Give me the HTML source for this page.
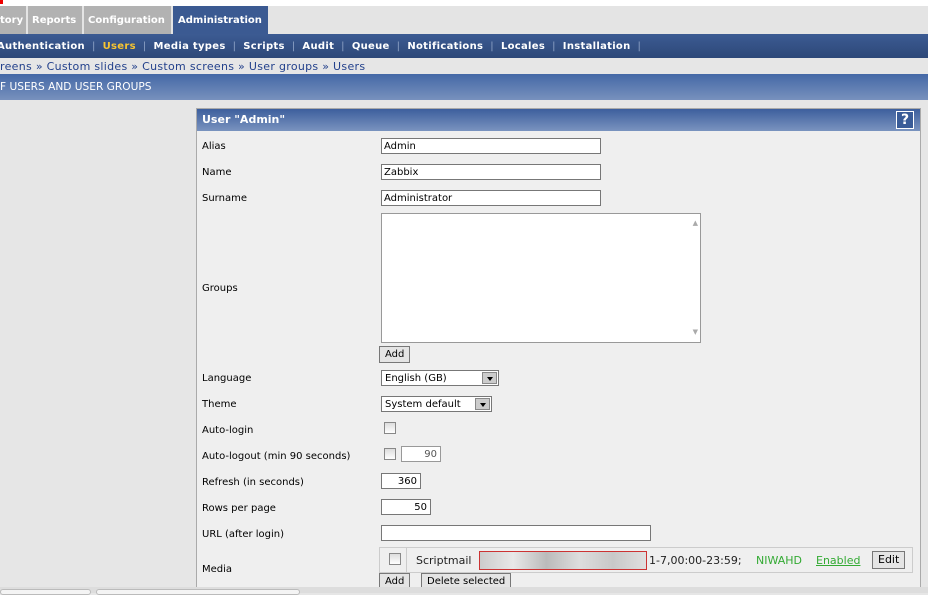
<!DOCTYPE html>
<html><head><style>
*{margin:0;padding:0;box-sizing:border-box}
body{width:928px;height:593px;overflow:hidden;background:#e6e6e6;font-family:"DejaVu Sans","Liberation Sans",sans-serif;font-size:10px;color:#000;position:relative}
.a{position:absolute}
.tab{position:absolute;top:6px;height:28px;background:#b2b2b2;color:#fff;font-weight:bold;font-size:10px;line-height:29px;padding-left:4px;white-space:nowrap}
.nav{top:34px;left:0;width:928px;height:24px;background:linear-gradient(#3c5b93,#2d4878);color:#fff;font-weight:bold;font-size:10px;line-height:25px;white-space:nowrap;letter-spacing:0.3px}
.nav span.s{color:#8ea3c6;margin:0 7px;font-weight:normal}
.bc{top:58px;left:0;height:16px;line-height:17px;color:#23418c;font-size:11px;letter-spacing:0.3px;white-space:nowrap}
.title{top:74px;left:0;width:928px;height:26px;background:linear-gradient(#4468a6,#7891bd);color:#fff;line-height:27px;font-size:10.6px}
.panel{left:196px;top:108px;width:725px;height:485px;background:#efefef;border:1px solid #aaa;border-bottom:none}
.ph{left:0;top:0;width:723px;height:22px;background:linear-gradient(#3d5f9d,#7a93bf);color:#fff;font-weight:bold;font-size:11px;line-height:21px;padding-left:5px}
.lbl{left:5px;font-size:10px}
.in{position:absolute;background:#fff;border:1px solid #777;height:16px;font-size:10px;line-height:15px;padding-left:2px}
.btn{position:absolute;background:#e4e4e4;border:1px solid #777;height:17px;font-size:10px;line-height:16px;padding:0 5px}
.cb{position:absolute;width:12px;height:12px;border:1px solid #888;background:linear-gradient(#ddd,#fff)}
.sel{position:absolute;background:#fff;border:1px solid #777;height:16px;line-height:15px;padding-left:3px;font-size:10px}
.sel i{position:absolute;right:1px;top:1px;width:15px;height:12px;background:#ccc;border:1px solid #888}
.sel i:after{content:"";position:absolute;left:4px;top:4px;border:3px solid transparent;border-top:4px solid #000}
</style></head><body>
<div class="a" style="left:0;top:0;width:928px;height:6px;background:#fff"></div>
<div class="a" style="left:0;top:0;width:3px;height:4px;background:#e00"></div>
<div class="a" style="left:0;top:6px;width:928px;height:28px;background:#e4e4e4"></div>
<div class="tab" style="left:0;width:26px;padding-left:0">tory</div>
<div class="tab" style="left:28px;width:54px">Reports</div>
<div class="tab" style="left:84px;width:87px">Configuration</div>
<div class="tab" style="left:173px;width:95px;background:#3b5a92;padding-left:5px">Administration</div>
<div class="a nav"><span style="margin-left:-3px">A</span>uthentication<span class="s">|</span><span style="color:#f7c531">Users</span><span class="s">|</span>Media types<span class="s">|</span>Scripts<span class="s">|</span>Audit<span class="s">|</span>Queue<span class="s">|</span>Notifications<span class="s">|</span>Locales<span class="s">|</span>Installation<span class="s">|</span></div>
<div class="a bc">reens » Custom slides » Custom screens » User groups » Users</div>
<div class="a title">F USERS AND USER GROUPS</div>
<div class="a panel">
 <div class="a ph">User "Admin"</div>
 <div class="a" style="left:699px;top:2px;width:18px;height:18px;border:1px solid #fff;color:#fff;font-weight:bold;font-size:14px;line-height:16px;text-align:center;background:#3a5c98">?</div>
 <div class="a lbl" style="top:32px">Alias</div>
 <div class="in" style="left:184px;top:29px;width:220px">Admin</div>
 <div class="a lbl" style="top:58px">Name</div>
 <div class="in" style="left:184px;top:55px;width:220px">Zabbix</div>
 <div class="a lbl" style="top:84px">Surname</div>
 <div class="in" style="left:184px;top:81px;width:220px">Administrator</div>
 <div class="in" style="left:184px;top:104px;width:320px;height:130px;border-color:#999"><div class="a" style="right:2px;top:2px;color:#aaa;font-size:7px">▲</div><div class="a" style="right:2px;bottom:2px;color:#aaa;font-size:7px">▼</div></div>
 <div class="a lbl" style="top:174px">Groups</div>
 <div class="btn" style="left:182px;top:237px">Add</div>
 <div class="a lbl" style="top:264px">Language</div>
 <div class="sel" style="left:184px;top:261px;width:118px">English (GB)<i></i></div>
 <div class="a lbl" style="top:290px">Theme</div>
 <div class="sel" style="left:184px;top:287px;width:111px">System default<i></i></div>
 <div class="a lbl" style="top:316px">Auto-login</div>
 <div class="cb" style="left:187px;top:313px"></div>
 <div class="a lbl" style="top:342px">Auto-logout (min 90 seconds)</div>
 <div class="cb" style="left:187px;top:339px"></div>
 <div class="in" style="left:204px;top:337px;width:40px;text-align:right;padding-right:3px;color:#555;border-color:#999">90</div>
 <div class="a lbl" style="top:368px">Refresh (in seconds)</div>
 <div class="in" style="left:184px;top:364px;width:40px;text-align:right;padding-right:3px">360</div>
 <div class="a lbl" style="top:394px">Rows per page</div>
 <div class="in" style="left:184px;top:390px;width:50px;text-align:right;padding-right:3px">50</div>
 <div class="a lbl" style="top:420px">URL (after login)</div>
 <div class="in" style="left:184px;top:416px;width:270px"></div>
 <div class="a lbl" style="top:455px">Media</div>
 <div class="a" style="left:182px;top:438px;width:534px;height:26px;border:1px solid #ccc;background:#efefef"></div>
 <div class="cb" style="left:192px;top:444px"></div>
 <div class="a" style="left:209px;top:439px;width:1px;height:24px;background:#ccc"></div>
 <div class="a" style="left:219px;top:445px;font-size:11px;color:#222">Scriptmail</div>
 <div class="a" style="left:282px;top:442px;width:168px;height:19px;border:1px solid #c33;background:linear-gradient(90deg,#ccc,#e8e8e8,#bbb,#ddd,#c8c8c8,#e0e0e0)"></div>
 <div class="a" style="left:452px;top:445px;font-size:11px;color:#222">1-7,00:00-23:59;</div>
 <div class="a" style="left:559px;top:445px;font-size:11px;color:#3a3">NIWAHD</div>
 <div class="a" style="left:619px;top:445px;font-size:11px;color:#3a3;text-decoration:underline">Enabled</div>
 <div class="btn" style="left:675px;top:442px;height:18px;line-height:16px;font-size:11px">Edit</div>
 <div class="btn" style="left:182px;top:464px">Add</div>
 <div class="btn" style="left:224px;top:464px">Delete selected</div>
</div>
<div class="a" style="left:0;top:587px;width:928px;height:6px;background:#ddd"></div>
<div class="a" style="left:0;top:589px;width:91px;height:6px;background:#f4f4f4;border:1px solid #bbb;border-radius:3px"></div>
<div class="a" style="left:96px;top:589px;width:204px;height:6px;background:#f4f4f4;border:1px solid #bbb;border-radius:3px"></div>
</body></html>
